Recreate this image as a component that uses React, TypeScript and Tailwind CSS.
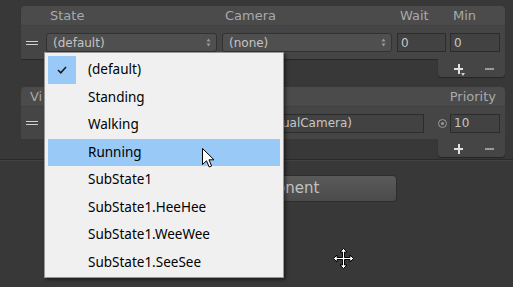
import React from "react";

const items = [
  "(default)",
  "Standing",
  "Walking",
  "Running",
  "SubState1",
  "SubState1.HeeHee",
  "SubState1.WeeWee",
  "SubState1.SeeSee",
];

function UpDown() {
  return (
    <svg width="5" height="9" viewBox="0 0 5 9" className="shrink-0">
      <path d="M2.5 0.5 L4.5 3.5 L0.5 3.5 Z" fill="#9a9a9a" />
      <path d="M2.5 8.5 L4.5 5.5 L0.5 5.5 Z" fill="#9a9a9a" />
    </svg>
  );
}

function Handle() {
  return (
    <div className="w-[12px] flex flex-col gap-[2px] shrink-0">
      <div className="h-[1px] bg-[#cfcfcf]" />
      <div className="h-[1px] bg-[#cfcfcf]" />
    </div>
  );
}

function Footer({ drop }: { drop?: boolean }) {
  return (
    <div className="flex justify-end">
      <div className="w-[67px] h-[18px] bg-[#454545] rounded-b-[4px] shadow-[0_1px_1px_rgba(0,0,0,0.35)] flex items-center pl-[16px] gap-[22px] text-[#d8d8d8]">
        <div className="relative w-[9px] h-[9px]">
          <div className="absolute left-0 top-[4px] w-[9px] h-[2px] bg-[#e0e0e0]" />
          <div className="absolute left-[3.5px] top-0 w-[2px] h-[10px] bg-[#e0e0e0]" />
          {drop && (
            <svg width="4" height="3" viewBox="0 0 4 3" className="absolute left-[7px] top-[9px]">
              <path d="M0 0 L4 0 L2 3 Z" fill="#d0d0d0" />
            </svg>
          )}
        </div>
        <div className="w-[9px] h-[2px] bg-[#9a9a9a] mt-[1px]" />
      </div>
    </div>
  );
}

function Field({ w, children }: { w: string; children?: React.ReactNode }) {
  return (
    <div className={`${w} h-[19px] bg-[#424242] border border-[#2c2c2c] flex items-center pl-[3px] text-[12px] text-[#c6c6c6] shrink-0`}>
      {children}
    </div>
  );
}

export default function App() {
  const panelFont = { fontFamily: '"DejaVu Sans", sans-serif' };
  return (
    <div
      className="w-[513px] h-[287px] bg-[#383838] relative overflow-hidden pt-[6px] pl-[21px] pr-[8px]"
      style={panelFont}
    >
      {/* first list */}
      <div className="rounded-t-[4px] overflow-hidden shadow-[0_1px_1px_rgba(0,0,0,0.3)]">
        <div className="h-[20px] bg-[#4b4b4b] flex items-center pl-[29px] text-[13px] text-[#a9a9a9] border-b border-[#414141]">
          <div className="w-[175px]">State</div>
          <div className="w-[175px]">Camera</div>
          <div className="w-[53px]">Wait</div>
          <div>Min</div>
        </div>
        <div className="h-[33px] bg-[#454545] flex items-center pl-[5px] gap-[5px]">
          <Handle />
          <div className="ml-[3px] w-[171px] h-[19px] rounded-[3px] bg-[#4f4f4f] border border-[#323232] flex items-center justify-between pl-[6px] pr-[5px] text-[12px] text-[#c4c4c4]">
            <span>(default)</span>
            <UpDown />
          </div>
          <div className="w-[170px] h-[19px] rounded-[3px] bg-[#4f4f4f] border border-[#323232] flex items-center justify-between pl-[6px] pr-[5px] text-[12px] text-[#c4c4c4] shrink-0">
            <span>(none)</span>
            <UpDown />
          </div>
          <Field w="w-[49px]">0</Field>
          <div className="-ml-[1px]">
            <Field w="w-[50px]">0</Field>
          </div>
        </div>
      </div>
      <Footer drop />

      {/* second list */}
      <div className="mt-[10px] rounded-t-[4px] overflow-hidden">
        <div className="h-[20px] bg-[#4b4b4b] flex items-center justify-between pl-[9px] pr-[9px] text-[13px] text-[#a9a9a9] border-b border-[#414141]">
          <span>Vi</span>
          <span>Priority</span>
        </div>
        <div className="h-[32px] bg-[#454545] flex items-center pl-[5px] gap-[8px]">
          <Handle />
          <div className="w-[378px] h-[19px] bg-[#424242] border border-[#2c2c2c] flex items-center justify-end pr-[71px] text-[12px] text-[#c6c6c6] shrink-0">
            vcam1 (CinemachineVirtualCamera)
          </div>
          <div className="ml-[6px] w-[9px] h-[9px] rounded-full border border-[#9a9a9a] flex items-center justify-center shrink-0">
            <div className="w-[3px] h-[3px] rounded-full bg-[#9a9a9a]" />
          </div>
          <Field w="w-[50px] -ml-[5px]">10</Field>
        </div>
      </div>
      <Footer />

      <div className="-ml-[21px] -mr-[8px] mt-[2px] h-[1px] bg-[#2a2a2a] border-b border-[#424242] box-content" />

      <div className="flex justify-center mt-[14px] -ml-[21px] -mr-[8px] pl-[29px]">
        <div className="w-[282px] h-[27px] rounded-[4px] bg-gradient-to-b from-[#5a5a5a] to-[#4b4b4b] border border-[#2d2d2d] flex items-center justify-center pl-[6px] text-[15px] text-[#c2c2c2] translate-x-[-15px]">
          Add Component
        </div>
      </div>

      {/* popup menu */}
      <div
        className="absolute left-[44px] top-[52px] w-[240px] h-[226px] bg-[#f0f0f0] border border-[#979797] shadow-[2px_2px_3px_rgba(0,0,0,0.45)] pt-[3px] px-[3px]"
        style={{ fontFamily: '"Noto Sans", sans-serif' }}
      >
        {items.map((it, i) => (
          <div
            key={it}
            className={`h-[27.5px] flex items-center text-[13.5px] text-black relative ${
              i === 3 ? "bg-[#99c9f6]" : ""
            }`}
          >
            {i === 0 && (
              <div className="absolute left-0 top-0 w-[28px] h-full bg-[#99c9f6] flex items-center justify-center">
                <svg width="10" height="8" viewBox="0 0 10 8">
                  <path d="M1 4 L3.8 6.8 L9 1" stroke="#1a1a1a" strokeWidth="1.6" fill="none" />
                </svg>
              </div>
            )}
            <span className="pl-[40px] leading-none">{it}</span>
          </div>
        ))}
      </div>

      {/* arrow cursor */}
      <svg className="absolute left-[202px] top-[148px]" width="13" height="21" viewBox="0 0 13 21">
        <path
          d="M0.5 0.5 L0.5 16.5 L4.5 12.8 L7.2 19 L9.6 18 L7 11.8 L12 11.8 Z"
          fill="#ffffff"
          stroke="#000000"
          strokeWidth="1"
        />
      </svg>

      {/* move cursor */}
      <svg className="absolute left-[333px] top-[248px]" width="21" height="21" viewBox="0 0 21 21">
        <path
          d="M10.5 0.5 L14 4 L11.5 4 L11.5 9.5 L17 9.5 L17 7 L20.5 10.5 L17 14 L17 11.5 L11.5 11.5 L11.5 17 L14 17 L10.5 20.5 L7 17 L9.5 17 L9.5 11.5 L4 11.5 L4 14 L0.5 10.5 L4 7 L4 9.5 L9.5 9.5 L9.5 4 L7 4 Z"
          fill="#ffffff"
          stroke="#000000"
          strokeWidth="1"
        />
      </svg>
    </div>
  );
}
